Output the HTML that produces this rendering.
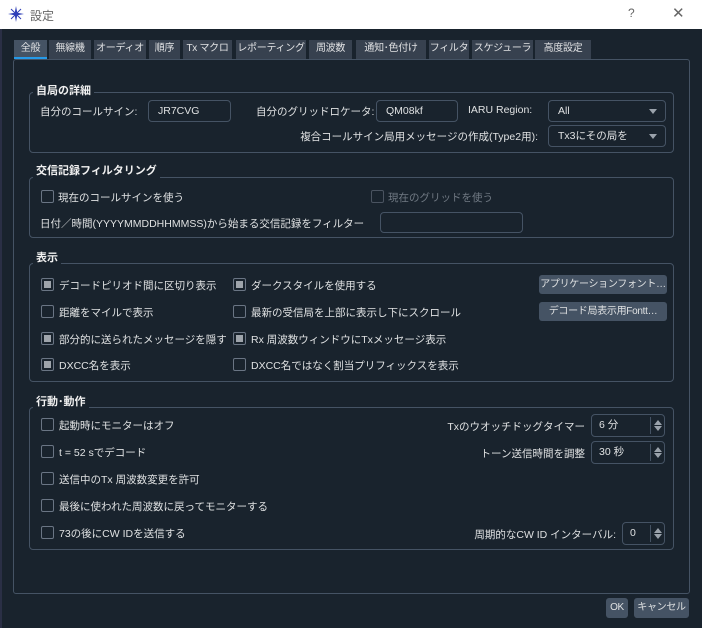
<!DOCTYPE html><html><head><meta charset="utf-8"><style>
*{box-sizing:border-box;margin:0;padding:0}
html,body{width:702px;height:628px;overflow:hidden}
body{background:#19232d;font-family:"Liberation Sans","Noto Sans CJK JP",sans-serif;font-size:10.5px;color:#dfe1e2;position:relative}
.a{position:absolute;white-space:nowrap}
.r{position:absolute;white-space:nowrap;text-align:right}
.tb{position:absolute;left:0;top:0;width:702px;height:29px;background:#fff;color:#555}
.tab{position:absolute;top:40px;height:19px;background:#37414f;color:#e0e1e3;text-align:center;line-height:18px;white-space:nowrap;overflow:hidden;font-size:10px;letter-spacing:-0.3px}
.frame{position:absolute;border:1px solid #455364;border-radius:4px}
.gt{position:absolute;font-weight:bold;background:#19232d;padding:0 3px;line-height:14px;color:#f0f0f0;white-space:nowrap;font-size:11px}
.inp{position:absolute;border:1px solid #455364;border-radius:4px;background:#19232d;padding-left:9px;line-height:20px;white-space:nowrap}
.cb{position:absolute;width:13px;height:13px;border:1px solid #6a7584;border-radius:2px;background:#19232d}
.cb.on::after{content:"";position:absolute;left:2px;top:2px;width:7px;height:7px;background:#9ea4ab}
.arr{position:absolute;right:8px;top:8px;width:0;height:0;border-left:4px solid transparent;border-right:4px solid transparent;border-top:5px solid #9aa2ab}
.btn{position:absolute;background:#455364;border-radius:3px;text-align:center;line-height:19px;white-space:nowrap;overflow:hidden;font-size:10px;letter-spacing:-0.3px}
.sp{position:absolute;right:0;top:2px;bottom:2px;width:14px;border-left:1px solid #455364}
.sp::before{content:"";position:absolute;left:3px;top:3px;border-left:4px solid transparent;border-right:4px solid transparent;border-bottom:5px solid #9aa2ab}
.sp::after{content:"";position:absolute;left:3px;bottom:3px;border-left:4px solid transparent;border-right:4px solid transparent;border-top:5px solid #9aa2ab}
</style></head><body>
<div class="tb">
<svg class="a" style="left:8px;top:6px" width="16" height="16" viewBox="0 0 16 16"><path d="M8 0 L9.3 6.7 L16 8 L9.3 9.3 L8 16 L6.7 9.3 L0 8 L6.7 6.7Z" fill="#2f3fb8"/><path d="M3 3L13 13M13 3L3 13" stroke="#2f3fb8" stroke-width="1"/></svg>
<div class="a" style="left:30px;top:7px;font-size:12px;color:#666">設定</div>
<div class="a" style="left:628px;top:6px;font-size:12px;color:#666">?</div>
<div class="a" style="left:672px;top:4px;font-size:15px;color:#666">✕</div>
</div>
<div class="a" style="left:0;top:29px;width:2px;height:599px;background:#2a2f45"></div>
<div class="frame" style="left:13px;top:59px;width:677px;height:535px;border-radius:3px"></div>
<div class="tab" style="left:14px;width:33px;background:#455364;border-bottom:2px solid #259ae9">全般</div>
<div class="tab" style="left:49px;width:42px">無線機</div>
<div class="tab" style="left:94px;width:52px">オーディオ</div>
<div class="tab" style="left:149px;width:31px">順序</div>
<div class="tab" style="left:183px;width:49px">Tx マクロ</div>
<div class="tab" style="left:236px;width:70px">レポーティング</div>
<div class="tab" style="left:309px;width:43px">周波数</div>
<div class="tab" style="left:356px;width:70px">通知･色付け</div>
<div class="tab" style="left:429px;width:40px">フィルタ</div>
<div class="tab" style="left:472px;width:61px">スケジューラ</div>
<div class="tab" style="left:535px;width:56px">高度設定</div>

<div class="frame" style="left:29px;top:92px;width:645px;height:61px"></div>
<div class="gt" style="left:33px;top:84px">自局の詳細</div>
<div class="a" style="left:40px;top:104px">自分のコールサイン:</div>
<div class="inp" style="left:148px;top:100px;width:83px;height:22px">JR7CVG</div>
<div class="a" style="left:256px;top:104px">自分のグリッドロケータ:</div>
<div class="inp" style="left:376px;top:100px;width:82px;height:22px">QM08kf</div>
<div class="a" style="left:468px;top:104px">IARU Region:</div>
<div class="inp" style="left:548px;top:100px;width:118px;height:22px">All<span class="arr"></span></div>
<div class="r" style="right:164px;top:129px">複合コールサイン局用メッセージの作成(Type2用):</div>
<div class="inp" style="left:548px;top:125px;width:118px;height:22px">Tx3にその局を<span class="arr"></span></div>

<div class="frame" style="left:29px;top:177px;width:645px;height:61px"></div>
<div class="gt" style="left:33px;top:164px">交信記録フィルタリング</div>
<div class="cb" style="left:41px;top:190px"></div><div class="a" style="left:58px;top:190px">現在のコールサインを使う</div>
<div class="cb" style="left:371px;top:190px;border-color:#4a5360"></div><div class="a" style="left:388px;top:190px;color:#707983">現在のグリッドを使う</div>
<div class="a" style="left:40px;top:216px">日付／時間(YYYYMMDDHHMMSS)から始まる交信記録をフィルター</div>
<div class="inp" style="left:380px;top:212px;width:143px;height:21px"></div>

<div class="frame" style="left:29px;top:263px;width:645px;height:119px"></div>
<div class="gt" style="left:33px;top:251px">表示</div>
<div class="cb on" style="left:41px;top:278px"></div><div class="a" style="left:59px;top:278px">デコードピリオド間に区切り表示</div>
<div class="cb" style="left:41px;top:305px"></div><div class="a" style="left:59px;top:305px">距離をマイルで表示</div>
<div class="cb on" style="left:41px;top:332px"></div><div class="a" style="left:59px;top:332px">部分的に送られたメッセージを隠す</div>
<div class="cb on" style="left:41px;top:358px"></div><div class="a" style="left:59px;top:358px">DXCC名を表示</div>
<div class="cb on" style="left:233px;top:278px"></div><div class="a" style="left:251px;top:278px">ダークスタイルを使用する</div>
<div class="cb" style="left:233px;top:305px"></div><div class="a" style="left:251px;top:305px">最新の受信局を上部に表示し下にスクロール</div>
<div class="cb on" style="left:233px;top:332px"></div><div class="a" style="left:251px;top:332px">Rx 周波数ウィンドウにTxメッセージ表示</div>
<div class="cb" style="left:233px;top:358px"></div><div class="a" style="left:251px;top:358px">DXCC名ではなく割当プリフィックスを表示</div>
<div class="btn" style="left:539px;top:275px;width:128px">アプリケーションフォント…</div>
<div class="btn" style="left:539px;top:302px;width:128px">デコード局表示用Fontt…</div>

<div class="frame" style="left:29px;top:407px;width:645px;height:143px"></div>
<div class="gt" style="left:33px;top:395px">行動･動作</div>
<div class="cb" style="left:41px;top:418px"></div><div class="a" style="left:59px;top:418px">起動時にモニターはオフ</div>
<div class="cb" style="left:41px;top:445px"></div><div class="a" style="left:59px;top:445px">t = 52 sでデコード</div>
<div class="cb" style="left:41px;top:472px"></div><div class="a" style="left:59px;top:472px">送信中のTx 周波数変更を許可</div>
<div class="cb" style="left:41px;top:499px"></div><div class="a" style="left:59px;top:499px">最後に使われた周波数に戻ってモニターする</div>
<div class="cb" style="left:41px;top:526px"></div><div class="a" style="left:59px;top:526px">73の後にCW IDを送信する</div>
<div class="r" style="right:117px;top:419px">Txのウオッチドッグタイマー</div>
<div class="inp" style="left:591px;top:414px;width:74px;height:23px;padding-left:7px">6 分<span class="sp"></span></div>
<div class="r" style="right:117px;top:446px">トーン送信時間を調整</div>
<div class="inp" style="left:591px;top:441px;width:74px;height:23px;padding-left:7px">30 秒<span class="sp"></span></div>
<div class="r" style="right:86px;top:527px">周期的なCW ID インターバル:</div>
<div class="inp" style="left:622px;top:522px;width:43px;height:23px;padding-left:7px">0<span class="sp"></span></div>

<div class="btn" style="left:606px;top:598px;width:22px;height:20px">OK</div>
<div class="btn" style="left:634px;top:598px;width:55px;height:20px">キャンセル</div>
</body></html>
